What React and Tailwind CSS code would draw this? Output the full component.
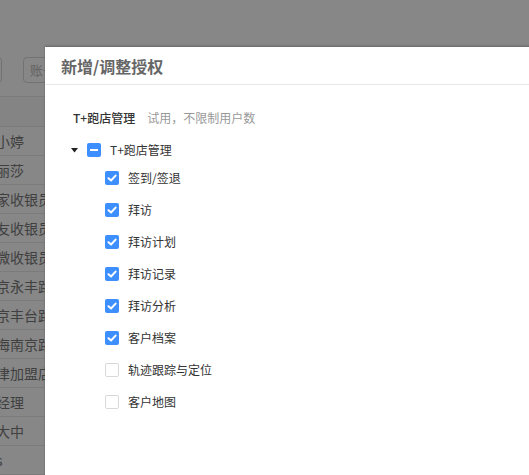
import React from "react";

const rows = ["小婷", "丽莎", "家收银员", "友收银员", "微收银员", "京永丰路", "京丰台路", "海南京路", "津加盟店", "经理", "大中", "s"];

const perms = [
  { name: "签到/签退", checked: true },
  { name: "拜访", checked: true },
  { name: "拜访计划", checked: true },
  { name: "拜访记录", checked: true },
  { name: "拜访分析", checked: true },
  { name: "客户档案", checked: true },
  { name: "轨迹跟踪与定位", checked: false },
  { name: "客户地图", checked: false },
];

const font = { fontFamily: '"Noto Sans CJK SC", "Noto Sans", sans-serif' };

// Checkbox box
const Box = ({ state }) => {
  if (state === "none")
    return <span className="w-[14px] h-[14px] rounded-[2px] border border-[#d9d9d9] bg-white shrink-0" />;
  return (
    <span className="w-[14px] h-[14px] rounded-[2px] bg-[#3d8eff] shrink-0 flex items-center justify-center">
      {state === "half" ? (
        <span className="w-[8px] h-[2px] bg-white" />
      ) : (
        <svg width="10" height="8" viewBox="0 0 10 8">
          <path d="M1.5 4.2 L4 6.5 L8.6 1.6" fill="none" stroke="white" strokeWidth="2" strokeLinecap="round" strokeLinejoin="round" />
        </svg>
      )}
    </span>
  );
};

const App = () => {
  return (
    <div className="relative w-[529px] h-[475px] overflow-hidden bg-white" style={font}>
      {/* Background page */}
      <div className="h-[47px] bg-white" />
      <div className="h-[50px] flex items-start pt-[10px] border-b border-[#e8e8e8]">
        <div className="ml-[-40px] w-[42px] h-[26px] border border-[#d9d9d9] rounded-[4px]" />
        <div className="ml-[21px] w-[80px] h-[26px] border border-[#d9d9d9] rounded-[4px] px-[6px] text-[13px] leading-[24px] text-[#bbb]">
          账号
        </div>
      </div>
      <div className="h-[30px] border-b border-[#e8e8e8] bg-[#fafafa]" />
      {rows.map((r, i) => (
        <div key={i} className="h-[29px] border-b border-[#e8e8e8] flex items-center">
          <span className="ml-[-4px] text-[14px] text-[#7a7a7a] whitespace-nowrap">{r}</span>
        </div>
      ))}

      {/* Overlay */}
      <div className="absolute inset-0 bg-black/[0.47]" />

      {/* Dialog */}
      <div className="absolute left-[45px] top-[47px] w-[560px] h-[460px] bg-white shadow-[0_-1px_2px_rgba(0,0,0,0.25)]">
        <div className="h-[38px] border-b border-[#e8e8e8] flex items-center pl-[16px]">
          <span className="text-[16px] font-bold text-[#666]">新增/调整授权</span>
        </div>
        <div className="pt-[25px] pl-[28px]">
          <div className="flex items-center h-[16px] text-[12px]">
            <span className="text-[#333] font-medium">T+跑店管理</span>
            <span className="ml-[12px] text-[#999]">试用，不限制用户数</span>
          </div>
          <div className="mt-[12px] h-[24px] flex items-center ml-[-3px] text-[12px] text-[#333]">
            <span className="w-[17px] shrink-0 flex">
              <svg width="7" height="5" viewBox="0 0 7 5" className="ml-[1px]">
                <path d="M0 0 H7 L3.5 4.5 Z" fill="#222" />
              </svg>
            </span>
            <Box state="half" />
            <span className="ml-[9px]">T+跑店管理</span>
          </div>
          {perms.map((p) => (
            <div key={p.name} className="h-[32px] flex items-center pl-[32px] text-[12px] text-[#333]">
              <Box state={p.checked ? "on" : "none"} />
              <span className="ml-[9px]">{p.name}</span>
            </div>
          ))}
        </div>
      </div>
    </div>
  );
};

export default App;
